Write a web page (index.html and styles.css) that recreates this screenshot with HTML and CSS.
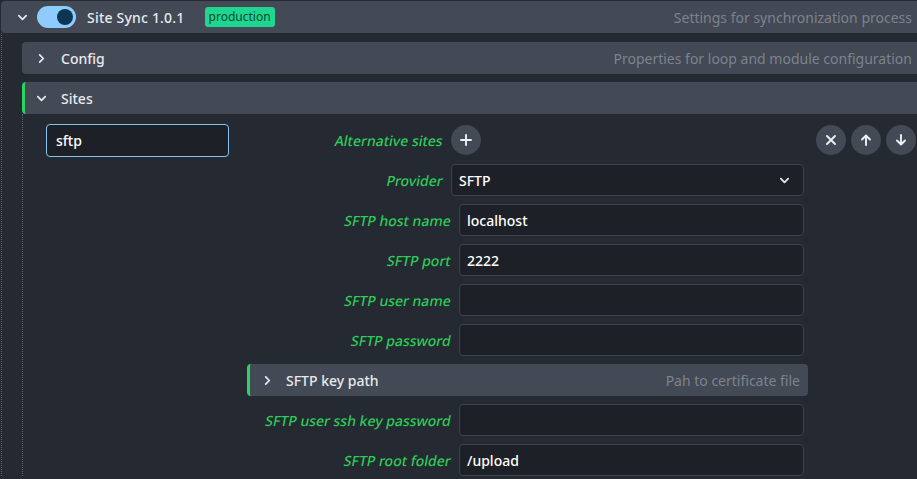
FILE: index.html
```html
<!DOCTYPE html>
<html lang="en">
<head>
  <meta charset="UTF-8">
  <title>Site Sync settings</title>
  <link rel="stylesheet" href="styles.css">
</head>
<body>
  <div class="addon">
    <div class="addon-head">
      <svg class="chev" viewBox="0 0 12 12"><path d="M2 4 L6 8 L10 4"/></svg>
      <span class="toggle"><span class="knob"></span></span>
      <span class="addon-title">Site Sync 1.0.1</span>
      <span class="badge">production</span>
      <span class="hint">Settings for synchronization process</span>
    </div>

    <div class="addon-body">
      <div class="panel">
        <svg class="chev" viewBox="0 0 12 12"><path d="M4 2 L8 6 L4 10"/></svg>
        <span class="panel-title">Config</span>
        <span class="hint">Properties for loop and module configuration</span>
      </div>

      <div class="panel active">
        <svg class="chev" viewBox="0 0 12 12"><path d="M2 4 L6 8 L10 4"/></svg>
        <span class="panel-title">Sites</span>
      </div>

      <div class="sites">
        <div class="site-list">
          <div class="site-name">sftp</div>
        </div>

        <div class="site-form">
          <div class="row wide">
            <label>Alternative sites</label>
            <span class="round">
              <svg viewBox="0 0 12 12"><path d="M6 1 V11 M1 6 H11"/></svg>
            </span>
          </div>
          <div class="row wide">
            <label>Provider</label>
            <div class="field select">SFTP
              <svg class="chev" viewBox="0 0 12 12"><path d="M2 4 L6 8 L10 4"/></svg>
            </div>
          </div>
          <div class="row">
            <label>SFTP host name</label>
            <div class="field">localhost</div>
          </div>
          <div class="row">
            <label>SFTP port</label>
            <div class="field">2222</div>
          </div>
          <div class="row">
            <label>SFTP user name</label>
            <div class="field"></div>
          </div>
          <div class="row">
            <label>SFTP password</label>
            <div class="field"></div>
          </div>
          <div class="panel active sub">
            <svg class="chev" viewBox="0 0 12 12"><path d="M4 2 L8 6 L4 10"/></svg>
            <span class="panel-title">SFTP key path</span>
            <span class="hint">Pah to certificate file</span>
          </div>
          <div class="row">
            <label>SFTP user ssh key password</label>
            <div class="field"></div>
          </div>
          <div class="row">
            <label>SFTP root folder</label>
            <div class="field">/upload</div>
          </div>
        </div>

        <div class="site-tools">
          <span class="round">
            <svg viewBox="0 0 12 12"><path d="M2 2 L10 10 M10 2 L2 10"/></svg>
          </span>
          <span class="round">
            <svg viewBox="0 0 12 12"><path d="M6 11 V1.5 M2 5.5 L6 1.5 L10 5.5"/></svg>
          </span>
          <span class="round">
            <svg viewBox="0 0 12 12"><path d="M6 1 V10.5 M2 6.5 L6 10.5 L10 6.5"/></svg>
          </span>
        </div>
      </div>
    </div>
  </div>
</body>
</html>
```

FILE: styles.css
```css
body {
  margin: 0;
  padding: 1px 0 0 1px;
  background-color: #252931;
  font-family: "Noto Sans", "Open Sans", sans-serif;
  font-size: 14px;
  font-weight: 500;
  color: #e8eaee;
  overflow: hidden;
  height: 478px;
}
svg {
  fill: none;
  stroke: currentColor;
  stroke-width: 1.9;
  stroke-linecap: round;
  stroke-linejoin: round;
}
.chev {
  width: 11px;
  height: 11px;
  color: #e8eaee;
}
.addon-head {
  display: flex;
  align-items: center;
  height: 32px;
  padding-left: 16px;
  background-color: #434955;
  border-radius: 4px 0 0 4px;
}
.toggle {
  width: 39px;
  height: 22px;
  margin-left: 9px;
  border-radius: 11px;
  background-color: #8ecbff;
  display: flex;
  align-items: center;
  justify-content: flex-end;
  padding-right: 3px;
  box-sizing: border-box;
}
.knob {
  width: 16px;
  height: 16px;
  border-radius: 50%;
  background-color: #0c3552;
}
.addon-title {
  margin-left: 11px;
  letter-spacing: 0.2px;
}
.badge {
  margin-left: 20px;
  padding: 1px 4px 2px;
  font-size: 12px;
  font-weight: 400;
  color: #0b4a30;
  background-color: #1fd690;
  border-radius: 3px;
}
.hint {
  margin-left: auto;
  padding-right: 5px;
  font-weight: 400;
  color: #7d838e;
}
.addon-body {
  border-left: 1px dotted #5b616c;
  padding: 9px 0 0 20px;
}
.panel {
  display: flex;
  align-items: center;
  height: 32px;
  margin-bottom: 8px;
  padding-left: 14px;
  background-color: #434955;
  border-radius: 4px 0 0 4px;
}
.panel-title {
  margin-left: 14px;
}
.panel.active {
  border-left: 3px solid #2cd35e;
  padding-left: 11px;
  margin-bottom: 0;
}
.sites {
  display: flex;
  border-left: 1px dotted #5b616c;
  padding: 10px 0 0 23px;
}
.site-list {
  width: 201px;
  flex-shrink: 0;
}
.site-name {
  width: 183px;
  height: 33px;
  box-sizing: border-box;
  padding: 0 9px;
  display: flex;
  align-items: center;
  background-color: #1d2027;
  border: 1px solid #86c2f3;
  border-radius: 4px;
  color: #fff;
}
.site-form {
  width: 561px;
  flex-shrink: 0;
  display: flex;
  flex-direction: column;
  gap: 8px;
}
.row {
  display: flex;
  align-items: center;
  height: 32px;
  gap: 8px;
}
.row label {
  width: 204px;
  text-align: right;
  color: #2dcc5a;
  transform: skewX(-11deg);
}
.row.wide label {
  width: 196px;
}
.field {
  width: 345px;
  height: 32px;
  box-sizing: border-box;
  padding: 0 7px;
  display: flex;
  align-items: center;
  background-color: #1d2027;
  border: 1px solid #3d424b;
  border-radius: 4px;
  color: #fff;
}
.field.select {
  width: 353px;
  justify-content: space-between;
  padding-right: 13px;
}
.panel.sub {
  margin: 0;
  border-radius: 4px;
  padding-left: 12px;
}
.panel.sub .panel-title {
  margin-left: 13px;
}
.panel.sub .hint {
  padding-right: 8px;
}
.round {
  width: 30px;
  height: 30px;
  flex-shrink: 0;
  border-radius: 50%;
  background-color: #434955;
  display: flex;
  align-items: center;
  justify-content: center;
  color: #eef0f3;
}
.round svg {
  width: 12px;
  height: 12px;
}
.site-tools {
  display: flex;
  gap: 5px;
  margin-left: 8px;
  padding-top: 1px;
}
```
